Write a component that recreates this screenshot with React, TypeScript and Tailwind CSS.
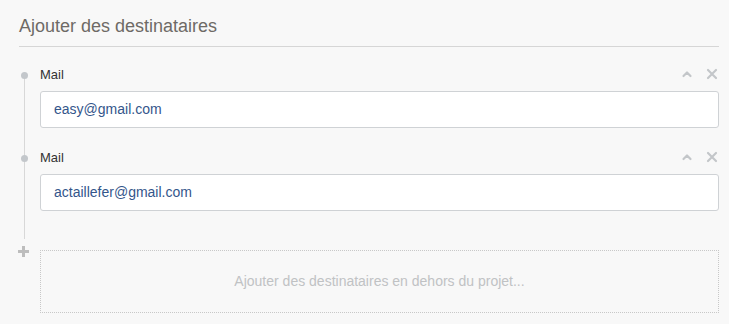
import React from "react";

const recipients = ["easy@gmail.com", "actaillefer@gmail.com"];

const ChevronUp = () => (
  <svg width="12" height="12" viewBox="0 0 12 12" fill="none">
    <path d="M2.5 8 L6 4.5 L9.5 8" stroke="#c3c6c9" strokeWidth="2.2" strokeLinecap="round" strokeLinejoin="round" />
  </svg>
);

const Cross = () => (
  <svg width="12" height="12" viewBox="0 0 12 12" fill="none">
    <path d="M2 2 L10 10 M10 2 L2 10" stroke="#c3c6c9" strokeWidth="2.2" strokeLinecap="round" />
  </svg>
);

const Row = ({ email }: { email: string }) => (
  <div className="flex">
    <div className="relative w-[21px] shrink-0">
      <span className="absolute left-[2px] top-[5px] h-[7px] w-[7px] rounded-full bg-[#c3c7cb]" />
    </div>
    <div className="flex-1">
      <div className="flex h-4 items-center justify-between">
        <span className="text-[13px] leading-4 text-[#333]">Mail</span>
        <div className="mr-[1px] -mt-[3px] flex items-center gap-[13px]">
          <ChevronUp />
          <Cross />
        </div>
      </div>
      <div className="mt-2 flex h-[37px] items-center rounded-[3px] border border-[#cfd2d5] bg-white px-[13px] text-[14px] text-[#34568b]">
        {email}
      </div>
    </div>
  </div>
);

export default function App() {
  return (
    <div className="h-[324px] w-full bg-[#f8f8f8] pl-[19px] pr-[10px] pt-[14px] [font-family:'Liberation_Sans',Arial,sans-serif]">
      <h2 className="border-b border-[#d6d6d6] pb-2 text-[18px] leading-6 text-[#6e6a66]">
        Ajouter des destinataires
      </h2>

      <div className="relative mt-5">
        <span className="absolute left-[5px] top-[8px] h-[164px] w-px bg-[#d8d8d8]" />
        <div className="flex flex-col gap-[22px]">
          {recipients.map((r) => (
            <Row key={r} email={r} />
          ))}
        </div>

        <div className="mt-[39px] flex">
          <div className="relative w-[21px] shrink-0">
            <svg className="absolute -left-[2px] top-[-5px]" width="13" height="13" viewBox="0 0 13 13">
              <path d="M6.5 1 V12 M1 6.5 H12" stroke="#bdbdbd" strokeWidth="3" />
            </svg>
          </div>
          <div className="flex h-[63px] flex-1 items-center justify-center border border-dotted border-[#c8c8c8] text-[14px] text-[#c0c2c4]">
            Ajouter des destinataires en dehors du projet...
          </div>
        </div>
      </div>
    </div>
  );
}
